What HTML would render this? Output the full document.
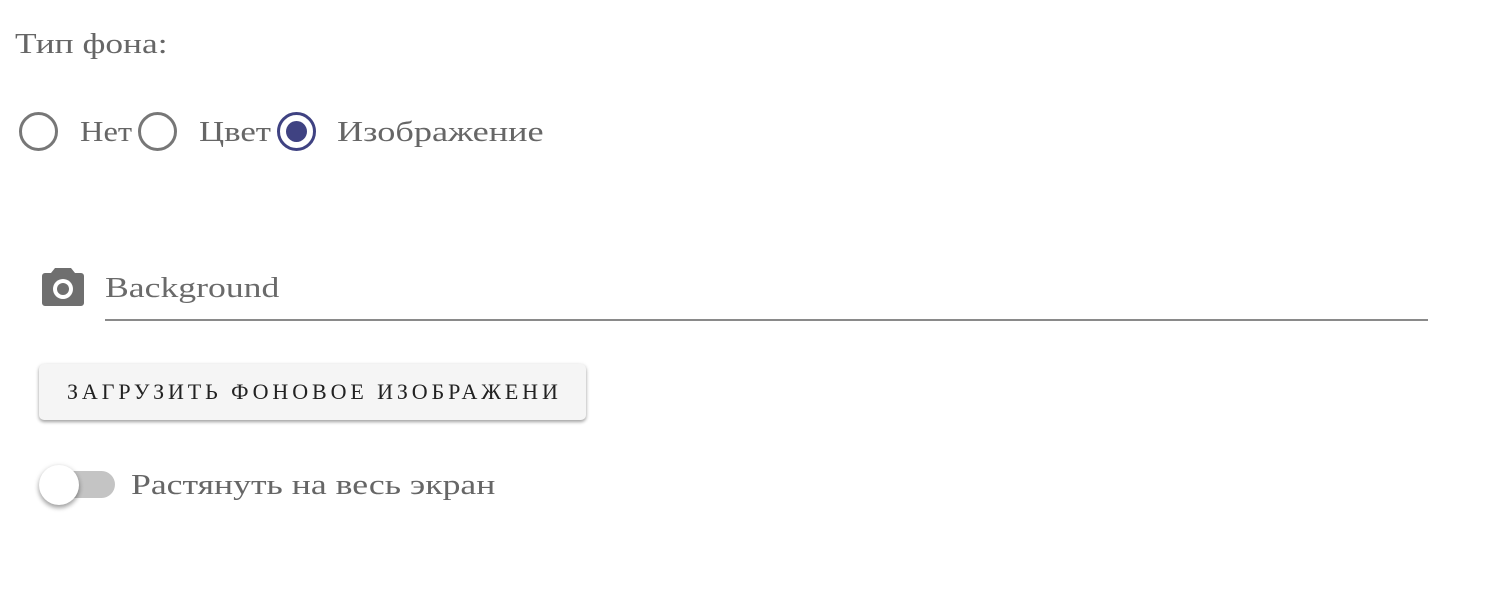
<!DOCTYPE html>
<html><head><meta charset="utf-8"><style>
body{margin:0;width:1510px;height:592px;background:#fff;font-family:"Liberation Serif","DejaVu Serif",serif;color:#666;position:relative;overflow:hidden}
.t{position:absolute;white-space:nowrap;font-size:29px;line-height:1;transform:scaleX(1.22);transform-origin:0 0}
.r{position:absolute;width:33px;height:33px;border:3.5px solid #777;border-radius:50%;box-sizing:content-box}
</style></head><body>
<div class="t" style="left:15px;top:30px">Тип фона:</div>
<div class="r" style="left:19px;top:112px"></div>
<div class="t" style="left:80px;top:118px;transform:scaleX(1.12)">Нет</div>
<div class="r" style="left:138px;top:112px"></div>
<div class="t" style="left:199px;top:118px;transform:scaleX(1.2)">Цвет</div>
<div class="r" style="left:277px;top:112px;border-color:#3f4282"><div style="position:absolute;left:6px;top:6px;width:21px;height:21px;border-radius:50%;background:#3f4282"></div></div>
<div class="t" style="left:337px;top:118px;transform:scaleX(1.25)">Изображение</div>
<svg style="position:absolute;left:42px;top:268px" width="42" height="38" viewBox="0 0 42 38"><path d="M13 0h16l4 5h6a3 3 0 0 1 3 3v27a3 3 0 0 1-3 3H3a3 3 0 0 1-3-3V8a3 3 0 0 1 3-3h6z" fill="#6f6f6f"/><circle cx="21" cy="21" r="10" fill="#fff"/><circle cx="21" cy="21" r="6" fill="#6f6f6f"/></svg>
<div class="t" style="left:105px;top:274px;color:#6a6a6a;transform:scaleX(1.23)">Background</div>
<div style="position:absolute;left:105px;top:319px;width:1323px;height:2px;background:#8a8a8a"></div>
<div style="position:absolute;left:39px;top:364px;width:547px;height:56px;background:#f5f5f5;border-radius:5px;box-shadow:0 2px 3px rgba(0,0,0,.3),0 1px 5px rgba(0,0,0,.12)"></div>
<div class="t" style="left:67px;top:381px;font-size:22px;letter-spacing:3.9px;color:#222;transform:none">ЗАГРУЗИТЬ ФОНОВОЕ ИЗОБРАЖЕНИ</div>
<div style="position:absolute;left:40px;top:471px;width:75px;height:27px;border-radius:14px;background:#c4c4c4"></div>
<div style="position:absolute;left:39px;top:465px;width:40px;height:40px;border-radius:50%;background:#fff;box-shadow:0 3px 5px rgba(0,0,0,.3),0 1px 6px rgba(0,0,0,.15)"></div>
<div class="t" style="left:131px;top:471px;transform:scaleX(1.23)">Растянуть на весь экран</div>
</body></html>
